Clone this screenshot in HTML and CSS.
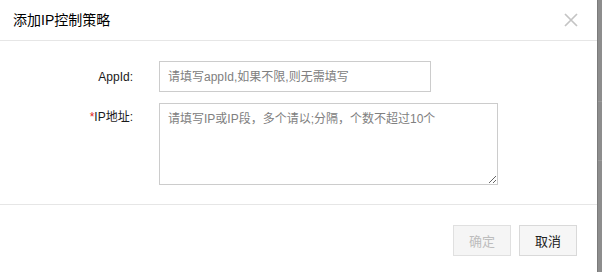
FILE: index.html
```html
<!DOCTYPE html>
<html lang="zh-CN">
<head>
<meta charset="utf-8">
<title>添加IP控制策略</title>
<link rel="stylesheet" href="styles.css">
</head>
<body>
<div class="page">
  <div class="dialog">
    <div class="dialog-header">
      <span class="dialog-title">添加IP控制策略</span>
      <button class="close" type="button" aria-label="关闭">
        <svg width="14" height="14" viewBox="0 0 14 14"><path d="M1 1L13 13M13 1L1 13" stroke="#c4c4c4" stroke-width="1.7" fill="none"/></svg>
      </button>
    </div>
    <div class="dialog-body">
      <div class="form-row">
        <label class="form-label">AppId:</label>
        <input class="form-input" type="text" placeholder="请填写appId,如果不限,则无需填写">
      </div>
      <div class="form-row form-row-top">
        <label class="form-label"><span class="req">*</span>IP地址:</label>
        <textarea class="form-textarea" placeholder="请填写IP或IP段，多个请以;分隔，个数不超过10个"></textarea>
      </div>
    </div>
    <div class="dialog-footer">
      <button class="btn btn-disabled" type="button" disabled>确定</button>
      <button class="btn" type="button">取消</button>
    </div>
  </div>
  <div class="backdrop">
    <div class="bd-line bd-l1"></div>
    <div class="bd-line bd-l2"></div>
  </div>
</div>
</body>
</html>
```
FILE: styles.css
```css
html, body {
  margin: 0;
  padding: 0;
  height: 100%;
}
body {
  font-family: "Liberation Sans", "Noto Sans CJK SC", sans-serif;
  color: #222;
  background: #8d8d8d;
}
.page {
  display: flex;
  height: 272px;
}
.dialog {
  width: 597px;
  flex: 0 0 597px;
  background: #fff;
  display: flex;
  flex-direction: column;
}
.dialog-header {
  height: 40px;
  border-bottom: 1px solid #e6e6e6;
  display: flex;
  align-items: center;
  justify-content: space-between;
  padding: 0 19px 0 13px;
}
.dialog-title {
  font-size: 14px;
  color: #000;
  line-height: 20px;
}
.close {
  border: 0;
  background: none;
  padding: 0;
  width: 14px;
  height: 14px;
  display: flex;
}
.dialog-body {
  padding: 20px 0 19px 0;
  display: flex;
  flex-direction: column;
  gap: 11px;
  border-bottom: 1px solid #e6e6e6;
}
.form-row {
  display: flex;
  align-items: center;
  gap: 26px;
}
.form-row-top {
  align-items: flex-start;
}
.form-label {
  width: 133px;
  flex: 0 0 133px;
  text-align: right;
  font-size: 12px;
  line-height: 18px;
  color: #1a1a1a;
}
.form-row-top .form-label {
  padding-top: 5px;
}
.req {
  color: #e0201a;
}
.form-input,
.form-textarea {
  box-sizing: border-box;
  border: 1px solid #cccccc;
  font-family: "Liberation Sans", "Noto Sans CJK SC", sans-serif;
  font-size: 12px;
  color: #333;
  outline: none;
  margin: 0;
  border-radius: 0;
  background: #fff;
}
.form-input {
  width: 272px;
  height: 31px;
  padding: 0 8px;
}
.form-textarea {
  width: 339px;
  height: 82px;
  padding: 6px 8px;
  line-height: 18px;
  display: block;
}
.form-input::placeholder,
.form-textarea::placeholder {
  color: #808080;
}
.dialog-footer {
  display: flex;
  justify-content: flex-end;
  gap: 8px;
  padding: 20px 20px 0 0;
}
.btn {
  width: 58px;
  height: 31px;
  box-sizing: border-box;
  border: 1px solid #d9d9d9;
  background: #f6f6f6;
  color: #222;
  font-family: "Liberation Sans", "Noto Sans CJK SC", sans-serif;
  font-size: 13px;
  padding: 0;
  margin: 0;
}
.btn-disabled {
  color: #bdbdbd;
  background: #f5f5f5;
  border-color: #e0e0e0;
}
.backdrop {
  flex: 1;
  background: #8d8d8d;
  border-left: 1px solid #7b7b7b;
  position: relative;
}
.bd-line {
  position: absolute;
  left: 0;
  right: 0;
  height: 1px;
  background: #9a9a9a;
}
.bd-l1 { top: 101px; }
.bd-l2 { top: 160px; }
```
